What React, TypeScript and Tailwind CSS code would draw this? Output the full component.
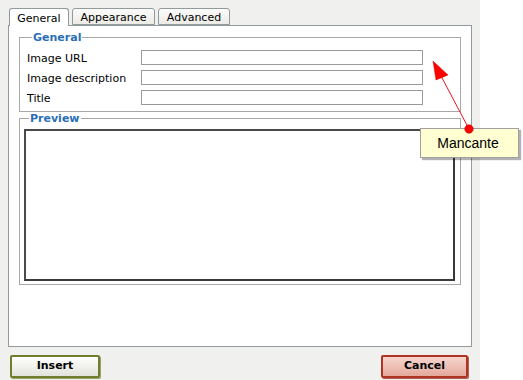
const tabs = [
  { name: 'General', width: 'w-[60px]', active: true },
  { name: 'Appearance', width: 'w-[83px]', active: false },
  { name: 'Advanced', width: 'w-[72px]', active: false },
];

const fields = ['Image URL', 'Image description', 'Title'];

export default function App() {
  return (
    <div className="relative h-[380px] w-[523px] overflow-hidden bg-white font-['DejaVu_Sans',Verdana,sans-serif] text-[11px] text-black">
      <div className="flex h-full w-[480px] flex-col bg-[#f0f0ee] px-[8px] pt-[8px]">
        {/* tabs */}
        <div className="relative z-10 flex h-[18px] items-stretch gap-[3px] pl-[1px]">
          {tabs.map((tab) => (
            <div
              key={tab.name}
              className={`${tab.width} flex items-center justify-center rounded-t-[3px] border border-[#919b9c] pt-[2px] leading-none ${
                tab.active
                  ? 'border-b-0 bg-white'
                  : 'h-[17px] bg-gradient-to-b from-[#fbfbfa] to-[#ecebe6]'
              }`}
            >
              {tab.name}
            </div>
          ))}
        </div>

        {/* panel */}
        <div className="-mt-px h-[322px] border border-[#919b9c] bg-white px-[10px] pt-[5px]">
          <fieldset className="w-[442px] border border-[#a8a8a8] px-[7px] pb-[6px]">
            <legend className="ml-[5px] px-[1px] font-bold leading-[13px] text-[#2b6fb6]">General</legend>
            <div className="mt-[6px] flex flex-col gap-[5px]">
              {fields.map((label) => (
                <div key={label} className="flex h-[15px] items-center">
                  <span className="w-[114px] pt-[1px] leading-none">{label}</span>
                  <div className="h-[15px] w-[282px] border border-[#9a9a9a] bg-white" />
                </div>
              ))}
            </div>
          </fieldset>

          <fieldset className="mt-[0px] w-[442px] border border-[#a8a8a8] pb-[3px] pl-[4px]">
            <legend className="ml-[5px] px-[1px] font-bold leading-[13px] text-[#2b6fb6]">Preview</legend>
            <div className="mt-[4px] h-[152px] w-[431px] border-2 border-[#4a4a4a] border-b-[#3a3a3a] border-r-[#3a3a3a] bg-white" />
          </fieldset>
        </div>

        {/* buttons */}
        <div className="mt-[8px] flex justify-between pl-[2px] pr-[4px]">
          <button className="h-[23px] w-[90px] rounded-[2px] border-2 border-[#6f7d2c] bg-gradient-to-b from-white to-[#e2e2dc] font-bold shadow-[1px_1px_0_#9aa070]">
            Insert
          </button>
          <button className="h-[23px] w-[87px] rounded-[2px] border-2 border-[#ad3423] bg-gradient-to-b from-[#f7d6ce] to-[#e3a89c] font-bold shadow-[1px_1px_0_#b06050]">
            Cancel
          </button>
        </div>
      </div>

      {/* annotation */}
      <div className="absolute left-[420px] top-[128px] flex h-[30px] w-[99px] items-center justify-center border border-[#a0a0a0] bg-[#ffffd2] pr-[3px] font-['Liberation_Sans',Arial,sans-serif] text-[14px] shadow-[2px_2px_1px_rgba(0,0,0,0.3)]">
        Mancante
      </div>
      <svg className="pointer-events-none absolute left-0 top-0" width="523" height="380" viewBox="0 0 523 380">
        <line x1="469" y1="129" x2="441" y2="76" stroke="#e8141a" strokeWidth="1" />
        <polygon points="433,61 448,75 436,80" fill="#ff0000" stroke="#d00000" strokeWidth="0.5" />
        <circle cx="469" cy="129" r="4.2" fill="#ff0000" stroke="#c00000" strokeWidth="0.6" />
      </svg>
    </div>
  );
}
